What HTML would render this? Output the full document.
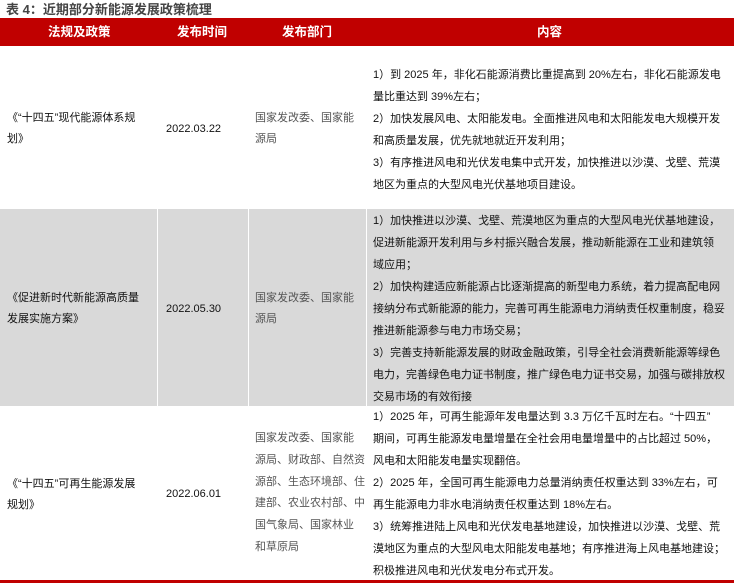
<!DOCTYPE html>
<html><head><meta charset="utf-8"><style>
*{margin:0;padding:0}
body{width:734px;height:585px;background:#fff;position:relative;overflow:hidden;font-family:"Liberation Sans","Noto Sans CJK SC",sans-serif;color:#111}
.a{position:absolute;white-space:nowrap;font-size:11px;line-height:22px}
.g{color:#555}
.t{position:absolute;left:6px;top:1px;font-size:13px;font-weight:bold;color:#444;line-height:17px}
.hd{position:absolute;left:0;top:18px;width:734px;height:28px;background:#c00000}
.h{position:absolute;top:18px;line-height:28px;color:#fff;font-weight:bold;font-size:12.5px}
.gr{position:absolute;top:209px;height:197px;background:#d9d9d9}
</style></head><body>
<div class="t">表 4：近期部分新能源发展政策梳理</div>
<div class="hd"></div>
<div class="h" style="left:48px">法规及政策</div>
<div class="h" style="left:177px">发布时间</div>
<div class="h" style="left:282px">发布部门</div>
<div class="h" style="left:537px">内容</div>

<div class="gr" style="left:0;width:157px"></div>
<div class="gr" style="left:158px;width:90px"></div>
<div class="gr" style="left:249px;width:117px"></div>
<div class="gr" style="left:367px;width:367px"></div>

<div class="a" style="left:7px;top:108px;line-height:21px">《“十四五”现代能源体系规<br>划》</div>
<div class="a" style="left:166px;top:118px">2022.03.22</div>
<div class="a g" style="left:255px;top:108px;line-height:21px">国家发改委、国家能<br>源局</div>
<div class="a" style="left:373px;top:64px">1）到 2025 年，非化石能源消费比重提高到 20%左右，非化石能源发电<br>量比重达到 39%左右；<br>2）加快发展风电、太阳能发电。全面推进风电和太阳能发电大规模开发<br>和高质量发展，优先就地就近开发利用；<br>3）有序推进风电和光伏发电集中式开发，加快推进以沙漠、戈壁、荒漠<br>地区为重点的大型风电光伏基地项目建设。</div>

<div class="a" style="left:7px;top:288px;line-height:21px">《促进新时代新能源高质量<br>发展实施方案》</div>
<div class="a" style="left:166px;top:298px">2022.05.30</div>
<div class="a g" style="left:255px;top:288px;line-height:21px">国家发改委、国家能<br>源局</div>
<div class="a" style="left:373px;top:210px">1）加快推进以沙漠、戈壁、荒漠地区为重点的大型风电光伏基地建设，<br>促进新能源开发利用与乡村振兴融合发展，推动新能源在工业和建筑领<br>域应用；<br>2）加快构建适应新能源占比逐渐提高的新型电力系统，着力提高配电网<br>接纳分布式新能源的能力，完善可再生能源电力消纳责任权重制度，稳妥<br>推进新能源参与电力市场交易；<br>3）完善支持新能源发展的财政金融政策，引导全社会消费新能源等绿色<br>电力，完善绿色电力证书制度，推广绿色电力证书交易，加强与碳排放权<br>交易市场的有效衔接</div>

<div class="a" style="left:7px;top:474px;line-height:21px">《“十四五”可再生能源发展<br>规划》</div>
<div class="a" style="left:166px;top:483px">2022.06.01</div>
<div class="a g" style="left:255px;top:428px;line-height:21.8px">国家发改委、国家能<br>源局、财政部、自然资<br>源部、生态环境部、住<br>建部、农业农村部、中<br>国气象局、国家林业<br>和草原局</div>
<div class="a" style="left:373px;top:406px">1）2025 年，可再生能源年发电量达到 3.3 万亿千瓦时左右。“十四五”<br>期间，可再生能源发电量增量在全社会用电量增量中的占比超过 50%，<br>风电和太阳能发电量实现翻倍。<br>2）2025 年，全国可再生能源电力总量消纳责任权重达到 33%左右，可<br>再生能源电力非水电消纳责任权重达到 18%左右。<br>3）统筹推进陆上风电和光伏发电基地建设，加快推进以沙漠、戈壁、荒<br>漠地区为重点的大型风电太阳能发电基地；有序推进海上风电基地建设；<br>积极推进风电和光伏发电分布式开发。</div>

<div style="position:absolute;left:0;top:580px;width:734px;height:3px;background:#c00000"></div>
</body></html>
